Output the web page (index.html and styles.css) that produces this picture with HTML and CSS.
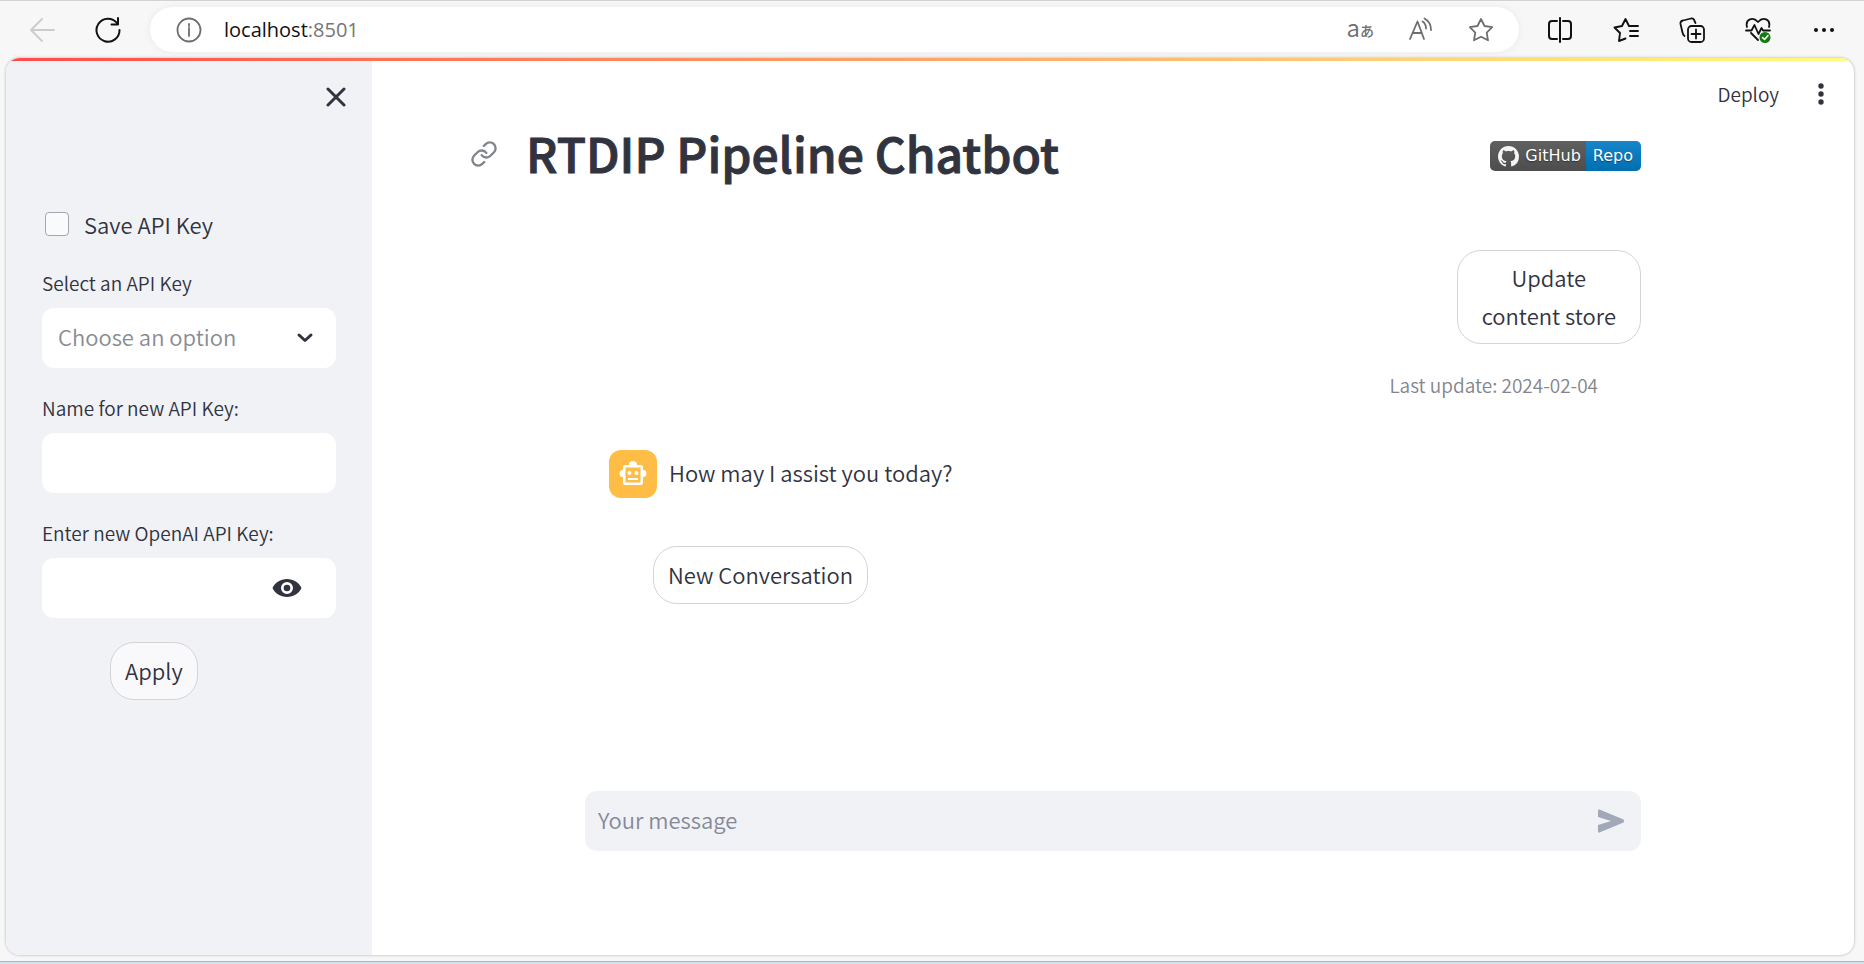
FILE: index.html
```html
<!DOCTYPE html>
<html lang="en">
<head>
<meta charset="utf-8">
<title>RTDIP Pipeline Chatbot</title>
<link rel="stylesheet" href="styles.css">
</head>
<body>
<header class="browser-bar">
  <div class="nav-buttons">
    <button class="icon-button back" aria-label="Back" disabled><svg width="26" height="26" viewBox="0 0 26 26"><path d="M25 13H2M13 2L2 13l11 11"/></svg></button>
    <button class="icon-button" aria-label="Reload"><svg width="26" height="26" viewBox="0 0 26 26"><path d="M24.500 13A11.500 11.500 0 1 1 22 6M23 1v6.500h-6.500" stroke-width="2"/></svg></button>
  </div>
  <div class="address">
    <button class="icon-button site-info" aria-label="Site information"><svg width="26" height="26" viewBox="0 0 26 26"><circle cx="13" cy="13" r="11.500"/><path d="M13 11v8M13 7v2"/></svg></button>
    <a class="url" href="#">localhost<span>:8501</span></a>
    <div class="address-tools">
      <button class="icon-button translate" aria-label="Translate">a<span>あ</span></button>
      <button class="icon-button" aria-label="Read aloud"><svg width="26" height="26" viewBox="0 0 26 26"><path d="M2 22L9.500 4.500 16 22M4.500 16h9.500M14.500 4.500c2.500 1.500 3.500 3 3.500 7M16.500 1.500c4.500 2.500 6.500 6 6.500 11.500"/></svg></button>
      <button class="icon-button" aria-label="Add to favorites"><svg width="26" height="26" viewBox="0 0 26 26"><path d="M13 2l3.500 7 7.700 1.100-5.500 5.500 1.300 7.700-7-3.600-7 3.600 1.300-7.700L1.800 10.100 9.500 9z"/></svg></button>
    </div>
  </div>
  <div class="browser-tools">
    <button class="icon-button" aria-label="Split screen"><svg width="26" height="26" viewBox="0 0 26 26"><path d="M13 1v24M10 4H5Q2 4 2 7v12q0 3 3 3h5M16 4h5q3 0 3 3v12q0 3-3 3h-5" stroke-width="2"/></svg></button>
    <button class="icon-button" aria-label="Favorites"><svg width="26" height="26" viewBox="0 0 26 26"><path d="M12.500 21.500L6 24l1-8-5.500-5.500L9 9l3.500-7L16 9h9M17 14h8M17 19h8" stroke-width="1.900"/></svg></button>
    <button class="icon-button" aria-label="Collections"><svg width="26" height="26" viewBox="0 0 26 26"><path d="M5.500 19Q4 18 3.500 15.500L1.500 7Q1 4 4 3.500l8-2q3-.5 3.500 2.500L16.500 6"/><rect x="9" y="9" width="16" height="16" rx="3.500"/><path d="M17 12.500v9M12.500 17h9"/></svg></button>
    <button class="icon-button" aria-label="Browser essentials"><svg width="26" height="26" viewBox="0 0 26 26"><path d="M2 10C0 2 8-.5 13 5c5-5.500 13-3 11 5M1 13.500h5.500L9.500 8l4 9 3-6 1.500 2.500H25M6 16l7 7"/><circle cx="20" cy="20.500" r="5.500" fill="#107c10" stroke="none"/><path d="M17.500 20.500l2 2 3.500-4" stroke="#fff" stroke-width="1.600"/></svg></button>
    <button class="icon-button" aria-label="Settings and more"><svg width="26" height="26" viewBox="0 0 26 26"><g fill="#111" stroke="none"><circle cx="5" cy="13" r="2"/><circle cx="13" cy="13" r="2"/><circle cx="21" cy="13" r="2"/></g></svg></button>
  </div>
</header>

<div class="app">
  <aside class="sidebar">
    <button class="close" aria-label="Close sidebar"><svg width="20" height="20" viewBox="0 0 20 20"><path d="M2 2l16 16M18 2L2 18"/></svg></button>
    <form class="key-form">
      <label class="check"><input type="checkbox">Save API Key</label>
      <div class="field">
        <label for="key">Select an API Key</label>
        <div class="control">
          <select id="key"><option>Choose an option</option></select>
          <svg class="chevron" width="18" height="12" viewBox="0 0 18 12"><path d="M3 3l6 5.500L15 3"/></svg>
        </div>
      </div>
      <div class="field">
        <label for="name">Name for new API Key:</label>
        <div class="control"><input id="name" type="text"></div>
      </div>
      <div class="field">
        <label for="secret">Enter new OpenAI API Key:</label>
        <div class="control">
          <input id="secret" type="password">
          <button class="reveal" type="button" aria-label="Show key"><svg width="30" height="20" viewBox="0 0 30 20"><path fill-rule="evenodd" d="M15 1C8.500 1 3 4.500.5 10 3 15.500 8.500 19 15 19s12-3.500 14.500-9C27 4.500 21.500 1 15 1zm0 15a6 6 0 1 1 0-12 6 6 0 0 1 0 12z"/><circle cx="15" cy="10" r="3.300"/></svg></button>
        </div>
      </div>
      <button class="pill apply" type="button">Apply</button>
    </form>
  </aside>

  <main class="main">
    <div class="toolbar">
      <button class="deploy">Deploy</button>
      <button class="kebab" aria-label="Menu"><svg width="6" height="22" viewBox="0 0 6 22"><circle cx="3" cy="3" r="2.700"/><circle cx="3" cy="11" r="2.700"/><circle cx="3" cy="19" r="2.700"/></svg></button>
    </div>
    <div class="title-row">
      <a class="anchor" href="#title" aria-label="Link to heading"><svg width="28" height="28" viewBox="0 0 24 24"><path d="M10 13a5 5 0 0 0 7.540.54l3-3a5 5 0 0 0-7.070-7.070l-1.720 1.710"/><path d="M14 11a5 5 0 0 0-7.540-.54l-3 3a5 5 0 0 0 7.070 7.070l1.710-1.710"/></svg></a>
      <h1 id="title">RTDIP Pipeline Chatbot</h1>
      <a class="badge" href="#"><span class="badge-name"><svg width="21" height="21" viewBox="0 0 16 16"><path d="M8 0C3.580 0 0 3.580 0 8c0 3.540 2.290 6.530 5.470 7.590.4.070.55-.17.55-.38 0-.19-.01-.82-.01-1.490-2.010.37-2.530-.49-2.690-.94-.09-.23-.48-.94-.82-1.130-.28-.15-.68-.52-.01-.53.63-.01 1.080.58 1.230.82.72 1.210 1.870.87 2.330.66.07-.52.28-.87.51-1.070-1.780-.2-3.640-.89-3.640-3.950 0-.87.31-1.590.82-2.150-.08-.2-.36-1.020.08-2.120 0 0 .67-.21 2.200.82.64-.18 1.320-.27 2-.27s1.360.09 2 .27c1.530-1.040 2.200-.82 2.200-.82.44 1.100.16 1.920.08 2.120.51.56.82 1.270.82 2.150 0 3.070-1.870 3.750-3.650 3.950.29.25.54.73.54 1.480 0 1.070-.01 1.930-.01 2.200 0 .21.15.46.55.38A8.010 8.010 0 0 0 16 8c0-4.420-3.580-8-8-8z"/></svg>GitHub</span><span class="badge-value">Repo</span></a>
    </div>
    <div class="content">
      <div class="update">
        <button class="pill store">Update<br>content store</button>
        <p class="caption">Last update: 2024-02-04</p>
      </div>
      <div class="message">
        <span class="avatar"><svg width="28" height="26" viewBox="0 0 28 26"><path fill-rule="evenodd" d="M10 4a4 4 0 0 1 8 0h4q2 0 2 2v3a3.500 3.500 0 0 1 0 7v6q0 2-2 2H6q-2 0-2-2v-6a3.500 3.500 0 0 1 0-7V6q0-2 2-2zM6.500 6.500v15h15v-15zM8.500 12a2 2 0 1 0 4 0 2 2 0 0 0-4 0zm7 0a2 2 0 1 0 4 0 2 2 0 0 0-4 0zM9 17h10v2H9z"/></svg></span>
        <p>How may I assist you today?</p>
      </div>
      <button class="pill new-chat">New Conversation</button>
      <form class="composer">
        <input type="text" placeholder="Your message" aria-label="Your message">
        <button class="send" type="button" aria-label="Send"><svg width="28" height="24" viewBox="0 0 28 24"><path d="M1 1.500Q1 0 2.500.5l24 10q1.500 1.500 0 3l-24 10Q1 24 1 22.500V16l13-4L1 8z"/></svg></button>
      </form>
    </div>
  </main>
</div>
<div class="desktop-edge"></div>
</body>
</html>
```

FILE: styles.css
```css
* { box-sizing: border-box; }

body {
  margin: 0;
  min-height: 100vh;
  display: flex;
  flex-direction: column;
  background: #f7f7f7;
  color: #31333f;
  font: 350 22px/38px "Noto Sans CJK JP", "Noto Sans", sans-serif;
}

button, input, select {
  font: inherit;
  color: inherit;
  border: 0;
  padding: 0;
  background: none;
}

a { color: inherit; text-decoration: none; }
p, h1 { margin: 0; }
svg { display: block; flex: none; }

.browser-bar {
  display: flex;
  align-items: center;
  height: 58px;
  padding: 0 27px 0 29px;
  border-top: 1px solid #d2d2d2;
}

.nav-buttons { display: flex; gap: 40px; margin-right: 29px; }
.icon-button svg { fill: none; stroke: #111; stroke-width: 1.8; stroke-linecap: round; stroke-linejoin: round; }
.back svg { stroke: #ccc; }

.address {
  flex: 1;
  display: flex;
  align-items: center;
  height: 45px;
  padding: 0 25px 0 26px;
  border-radius: 23px;
  background: #fff;
  box-shadow: 0 0 8px rgba(0, 0, 0, .06);
}

.address .icon-button svg { stroke: #6e6e6e; }
.translate { color: #6e6e6e; font-size: 24px; line-height: 24px; padding-bottom: 2px; }
.translate span { font-size: 14px; font-weight: 500; vertical-align: 1px; }
.url { margin-left: 22px; color: #111; font: 20px/28px "Open Sans", sans-serif; }
.url span { color: #767676; }
.address-tools { display: flex; gap: 34px; margin-left: auto; }
.browser-tools { display: flex; gap: 40px; margin-left: 28px; }

.app {
  position: relative;
  flex: 1;
  display: flex;
  margin: 0 10px 6px 6px;
  overflow: hidden;
  border-radius: 14px;
  background: #fff;
  box-shadow: 0 0 3px rgba(0, 0, 0, .3);
}

.app::before {
  content: "";
  position: absolute;
  inset: 0 0 auto;
  height: 3px;
  background: linear-gradient(90deg, #ff4b4b, #fffd80);
}

.sidebar {
  display: flex;
  flex-direction: column;
  width: 366px;
  padding: 29px 36px;
  background: #f0f2f6;
}

.close { align-self: flex-end; margin-right: -19px; padding: 0 9px; }
.close svg, .chevron { fill: none; stroke: #31333f; stroke-width: 3; stroke-linecap: round; stroke-linejoin: round; }
.key-form { display: flex; flex-direction: column; margin-top: 98px; }
.check { display: flex; align-items: center; gap: 15px; margin-left: 3px; }

.check input {
  appearance: none;
  width: 24px;
  height: 24px;
  margin: 0;
  border: 1px solid #a3a5ad;
  border-radius: 4px;
  background: #f9fafc;
}

.field { margin-top: 25px; }
.field label { display: block; margin-bottom: 10px; font-size: 19px; line-height: 30px; }
.control { position: relative; display: flex; height: 60px; border-radius: 12px; background: #fff; }
.control input, .control select { width: 100%; padding: 0 16px 4px; border-radius: 12px; }
.control select { appearance: none; color: #898b92; }
.chevron { position: absolute; right: 22px; top: 24px; pointer-events: none; }
.reveal { position: absolute; right: 34px; top: 20px; }
.reveal svg, .kebab svg { fill: #31333f; }

.pill {
  padding: 8px 14px 10px;
  border: 1px solid #d3d4d7;
  border-radius: 24px;
  background: #fff;
}

.apply { margin: 24px auto 0 68px; background: #f9f9fb; }

.main { flex: 1; display: flex; flex-direction: column; min-width: 0; }
.toolbar { display: flex; justify-content: flex-end; align-items: center; gap: 39px; padding: 17px 30px 0 0; }
.deploy { font-size: 19px; }

.title-row { display: flex; align-items: center; margin: 0 213px 0 98px; height: 86px; }
.anchor { padding-bottom: 4px; }
.anchor svg { fill: none; stroke: #83858c; stroke-width: 2; stroke-linecap: round; stroke-linejoin: round; }

h1 {
  flex: 1;
  margin-left: 28px;
  padding-bottom: 8px;
  font-size: 48px;
  line-height: 72px;
  font-weight: 500;
  -webkit-text-stroke: 1px #31333f;
}

.badge {
  display: flex;
  height: 30px;
  overflow: hidden;
  border-radius: 5px;
  color: #fff;
  font: 16px/30px "DejaVu Sans", sans-serif;
  text-shadow: 0 1px 1px rgba(0, 0, 0, .4);
}

.badge-name { display: flex; align-items: center; gap: 6px; padding: 0 5px 0 8px; background: linear-gradient(#606060, #4d4d4d); }
.badge-name svg { fill: #f5f5f5; }
.badge-value { padding: 0 8px 0 7px; background: linear-gradient(#1686c8, #006fb2); }

.content { flex: 1; display: flex; flex-direction: column; padding: 0 213px 104px 213px; }
.update { display: flex; flex-direction: column; align-items: flex-end; margin-top: 51px; }
.store { padding: 7px 24px 9px; }
.caption { margin: 22px 43px 0 0; color: #83858c; font-size: 19px; }
.message { display: flex; align-items: center; gap: 12px; margin: 46px 0 0 24px; }

.avatar { display: flex; align-items: center; justify-content: center; width: 48px; height: 48px; border-radius: 12px; background: #ffbd45; }
.avatar svg { fill: #fff; }
.message p { padding-bottom: 4px; }
.new-chat { align-self: flex-start; margin: 48px 0 0 68px; }

.composer { display: flex; align-items: center; height: 60px; margin-top: auto; padding: 0 16px 0 13px; border-radius: 12px; background: #f0f2f6; }
.composer input { flex: 1; min-width: 0; padding-bottom: 4px; }
.composer input::placeholder { color: #858998; opacity: 1; }
.send svg { fill: #a3a8b8; }

.desktop-edge { height: 3px; border-top: 1px solid #a9b5bf; background: #cde5ec; }
```
